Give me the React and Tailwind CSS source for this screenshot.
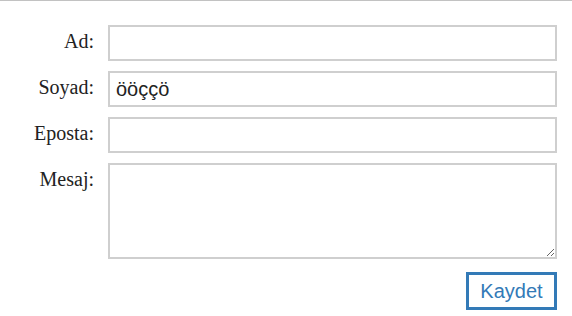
import React from "react";

const Field = ({ label, children }) => (
  <>
    <label className="text-right pt-[4px] text-[20px] leading-[24px] text-[#222]" style={{}}>
      {label}
    </label>
    {children}
  </>
);

const inputCls =
  "w-full h-[36px] border-2 border-[#cfcfcf] bg-white px-[6px] text-[20px] text-[#222] outline-none font-['Liberation_Sans',Arial,sans-serif]";

const App = () => {
  return (
    <div className="w-[572px] h-[316px] bg-white border-t border-[#c2c2c2] font-['Liberation_Serif','Times_New_Roman',serif]">
      <form className="grid grid-cols-[94px_449px] gap-x-[14px] gap-y-[10px] pt-[24px]">
        <Field label="Ad:">
          <input type="text" className={inputCls} />
        </Field>
        <Field label="Soyad:">
          <input type="text" className={inputCls} defaultValue="ööççö" />
        </Field>
        <Field label="Eposta:">
          <input type="text" className={inputCls} />
        </Field>
        <Field label="Mesaj:">
          <textarea className="w-full h-[96px] border-2 border-[#cfcfcf] bg-white px-[6px] text-[20px] outline-none font-['Liberation_Sans',Arial,sans-serif]" />
        </Field>
        <div />
        <div className="flex justify-end pt-[3px]">
          <button
            type="button"
            className="w-[91px] h-[38px] border-[3px] border-[#337ab7] bg-white text-[20px] text-[#337ab7] font-['Liberation_Sans',Arial,sans-serif]"
          >
            Kaydet
          </button>
        </div>
      </form>
    </div>
  );
};

export default App;
